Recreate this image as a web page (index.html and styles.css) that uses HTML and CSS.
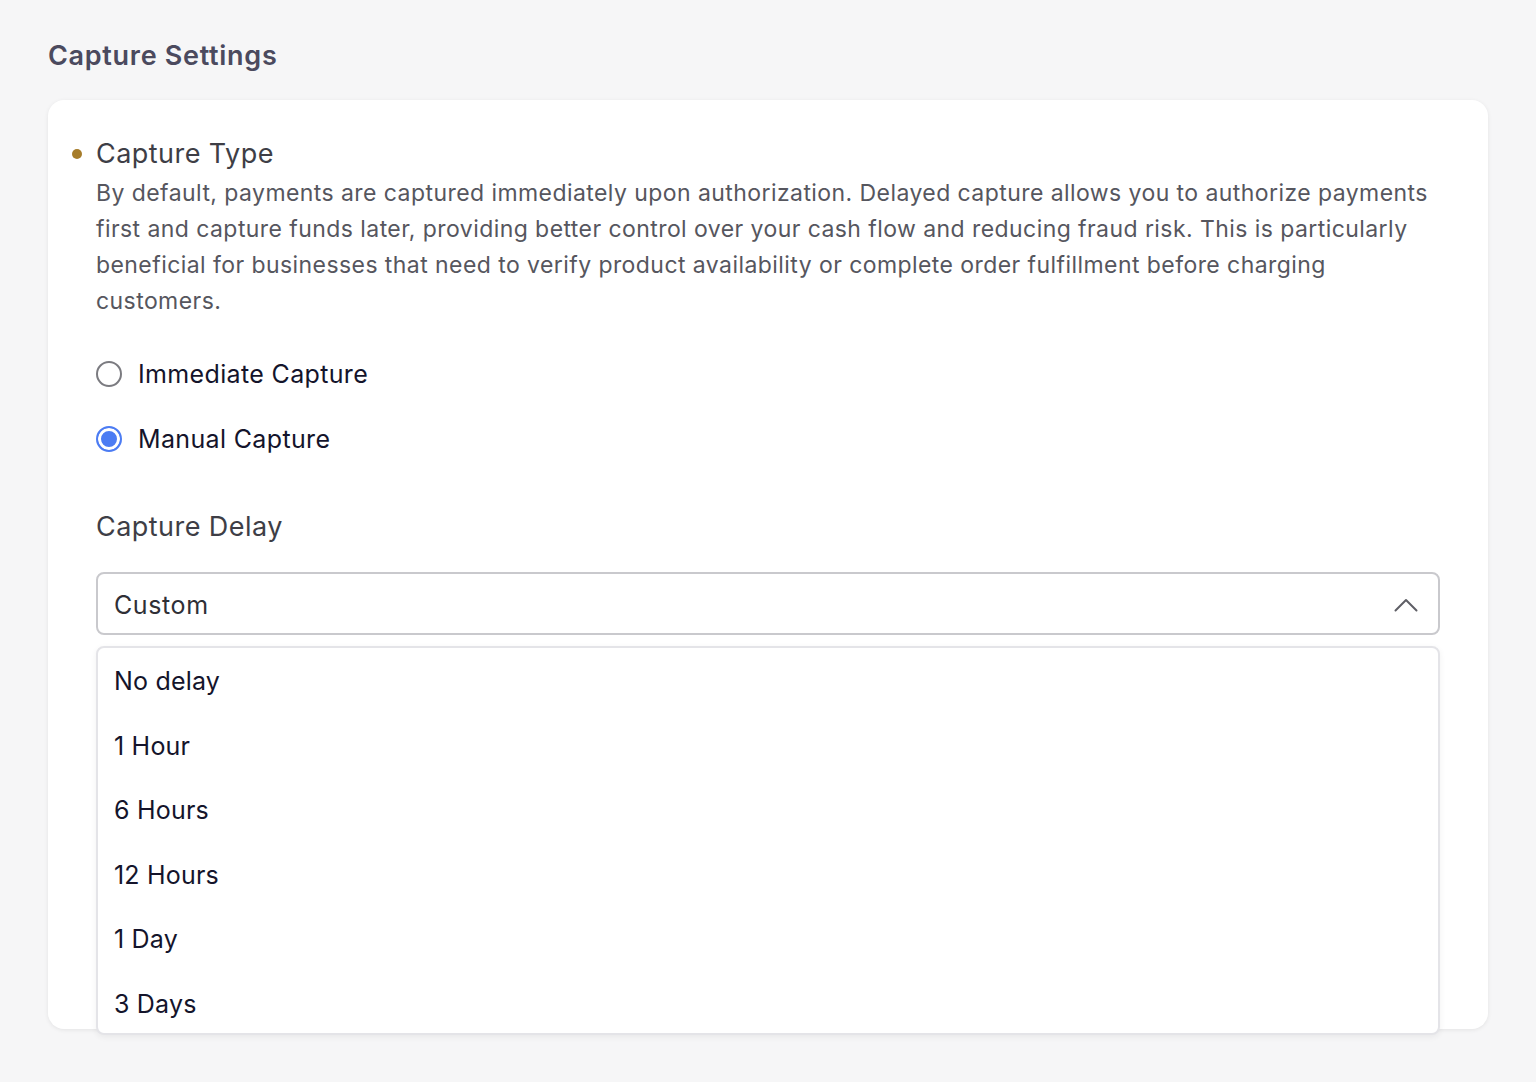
FILE: index.html
```html
<!DOCTYPE html>
<html>
	<head>
		<meta charset="UTF-8">
		<title>Capture Settings</title>
		<link rel="stylesheet" href="styles.css">
	</head>
	<body>
		<div class="page">
			<h2 class="page_title">Capture Settings</h2>
			<div class="card">
				<div class="field_head">
					<span class="dot"></span>
					<h3 class="field_title">Capture Type</h3>
				</div>
				<p class="desc">By default, payments are captured immediately upon authorization. Delayed capture allows you to authorize payments first and capture funds later, providing better control over your cash flow and reducing fraud risk. This is particularly beneficial for businesses that need to verify product availability or complete order fulfillment before charging customers.</p>

				<div class="radios">
					<label class="radio">
						<span class="circle"></span>
						<span class="radio_text">Immediate Capture</span>
					</label>
					<label class="radio checked">
						<span class="circle"></span>
						<span class="radio_text">Manual Capture</span>
					</label>
				</div>

				<h3 class="sub_title">Capture Delay</h3>
				<div class="select_wrap">
					<div class="select">
						<span class="select_value">Custom</span>
						<svg class="chevron" width="24" height="14" viewBox="0 0 24 14">
							<path d="M1.5 12.5 L12 2 L22.5 12.5" fill="none" stroke="#5f5f66" stroke-width="2" stroke-linecap="round" stroke-linejoin="round"/>
						</svg>
					</div>
					<ul class="options">
						<li>No delay</li>
						<li>1 Hour</li>
						<li>6 Hours</li>
						<li>12 Hours</li>
						<li>1 Day</li>
						<li>3 Days</li>
					</ul>
				</div>
			</div>
		</div>
	</body>
</html>
```

FILE: styles.css
```css
html,body,h2,h3,p,ul{
	margin: 0;
	padding: 0;
}
body{
	background-color: #f6f6f7;
	font-family: Inter, "Noto Sans", sans-serif;
	height: 1082px;
	overflow: hidden;
}
.page{
	padding: 38px 48px 0 48px;
}
.page_title{
	font-size: 27px;
	font-weight: 600;
	color: #4b4a5e;
	line-height: 36px;
	letter-spacing: 0.7px;
	margin-bottom: 26px;
}
.card{
	box-sizing: border-box;
	height: 929px;
	background-color: #fff;
	border-radius: 16px;
	box-shadow: 0 1px 4px rgba(0,0,0,0.08);
	padding: 36px 48px 0 48px;
}
.field_head{
	position: relative;
}
.dot{
	position: absolute;
	left: -24px;
	top: 13px;
	width: 10px;
	height: 10px;
	border-radius: 50%;
	background-color: #a67c2a;
}
.field_title{
	font-size: 27px;
	font-weight: 400;
	color: #3e3e46;
	line-height: 36px;
	letter-spacing: 0.45px;
}
.desc{
	font-size: 23px;
	line-height: 36px;
	color: #56565e;
	letter-spacing: 0.43px;
	margin-top: 3px;
}
.radios{
	display: flex;
	flex-direction: column;
	gap: 29px;
	margin-top: 37px;
}
.radio{
	display: flex;
	align-items: center;
	gap: 16px;
	height: 36px;
}
.circle{
	box-sizing: border-box;
	width: 26px;
	height: 26px;
	border-radius: 50%;
	border: 2px solid #7b7b80;
	background-color: #fff;
}
.radio.checked .circle{
	border: 2px solid #4c7cf3;
	box-shadow: inset 0 0 0 3px #fff;
	background-color: #4c7cf3;
}
.radio_text{
	font-size: 25px;
	color: #14142b;
	letter-spacing: 0.35px;
}
.sub_title{
	font-size: 27px;
	font-weight: 400;
	color: #3e3e46;
	line-height: 36px;
	letter-spacing: 0.45px;
	margin-top: 52px;
}
.select_wrap{
	position: relative;
	margin-top: 27px;
}
.select{
	box-sizing: border-box;
	height: 63px;
	border: 2px solid #c9c9cd;
	border-radius: 8px;
	display: flex;
	align-items: center;
	justify-content: space-between;
	padding: 2px 20px 0 16px;
}
.select_value{
	font-size: 25px;
	color: #2f2f36;
	letter-spacing: 0.6px;
}
.options{
	position: absolute;
	left: 0;
	right: 0;
	top: 74px;
	list-style: none;
	background-color: #fff;
	border: 2px solid #e4e4e8;
	border-radius: 8px;
	box-shadow: 0 2px 6px rgba(0,0,0,0.06);
	padding: 15px 0 11px 0;
}
.options li{
	font-size: 25px;
	color: #14142b;
	line-height: 36px;
	letter-spacing: 0.2px;
	padding: 0 16px;
	margin-bottom: 28.6px;
}
.options li:last-child{
	margin-bottom: 0;
}
```
